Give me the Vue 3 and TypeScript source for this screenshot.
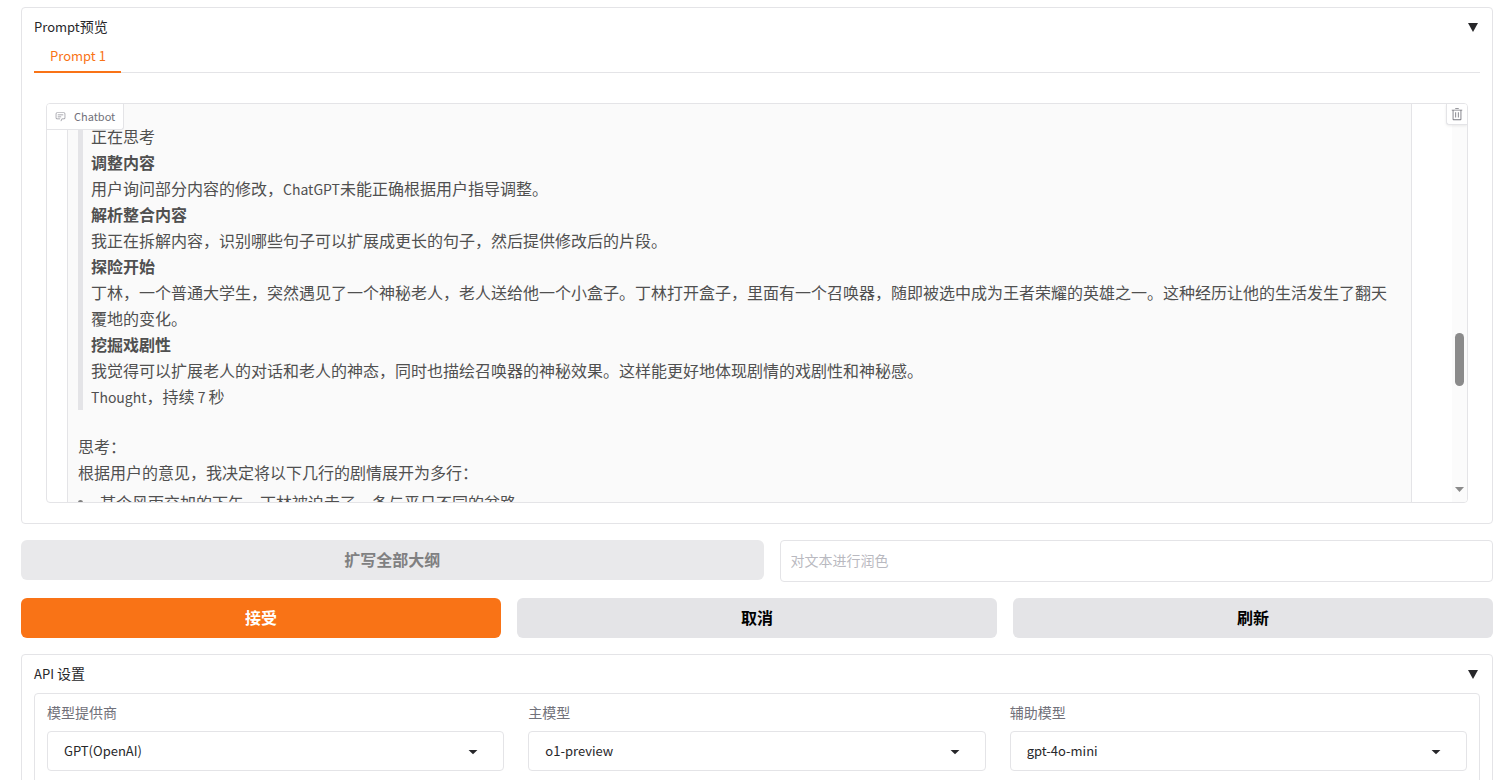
<script setup lang="ts">
import { ref } from 'vue'

interface ModelField {
  id: string
  label: string
  value: string
}

interface Thought {
  heading: string
  body: string
}

const promptOpen = ref(true)
const apiOpen = ref(true)
const polish = ref('')

const thoughts: Thought[] = [
  { heading: '调整内容', body: '用户询问部分内容的修改，ChatGPT未能正确根据用户指导调整。' },
  { heading: '解析整合内容', body: '我正在拆解内容，识别哪些句子可以扩展成更长的句子，然后提供修改后的片段。' },
  {
    heading: '探险开始',
    body: '丁林，一个普通大学生，突然遇见了一个神秘老人，老人送给他一个小盒子。丁林打开盒子，里面有一个召唤器，随即被选中成为王者荣耀的英雄之一。这种经历让他的生活发生了翻天覆地的变化。',
  },
  {
    heading: '挖掘戏剧性',
    body: '我觉得可以扩展老人的对话和老人的神态，同时也描绘召唤器的神秘效果。这样能更好地体现剧情的戏剧性和神秘感。',
  },
]

const fields: ModelField[] = [
  { id: 'provider', label: '模型提供商', value: 'GPT(OpenAI)' },
  { id: 'main-model', label: '主模型', value: 'o1-preview' },
  { id: 'sub-model', label: '辅助模型', value: 'gpt-4o-mini' },
]

// Splits mixed text so that Latin runs can be set a little smaller than the Chinese ones.
const runs = (text: string): string[] => text.split(/([A-Za-z]+)/).filter(Boolean)
const isLatin = (text: string): boolean => /^[A-Za-z]/.test(text)
</script>

<template>
  <main class="page">
    <section class="panel">
      <button class="panel-head" type="button" :aria-expanded="promptOpen" @click="promptOpen = !promptOpen">
        <span class="title"><span class="latin">Prompt</span>预览</span>
        <svg class="marker" viewBox="0 0 10 9" aria-hidden="true"><path d="M0 0h10L5 9z" /></svg>
      </button>
      <div v-show="promptOpen">
        <div class="tabs" role="tablist">
          <button class="tab" type="button" role="tab" aria-selected="true">Prompt 1</button>
        </div>
        <div class="tab-body">
          <div class="chat">
            <div class="chat-label">
              <svg viewBox="0 0 32 32" aria-hidden="true">
                <path d="M17.74 30L16 29l4-7h6a2 2 0 0 0 2-2V8a2 2 0 0 0-2-2H6a2 2 0 0 0-2 2v12a2 2 0 0 0 2 2h9v2H6a4 4 0 0 1-4-4V8a4 4 0 0 1 4-4h20a4 4 0 0 1 4 4v12a4 4 0 0 1-4 4h-4.84Z" />
                <path d="M8 10h16v2H8zm0 6h10v2H8z" />
              </svg>
              <span>Chatbot</span>
            </div>
            <div class="log">
              <article class="bubble">
                <blockquote>
                  <p>正在思考</p>
                  <template v-for="t in thoughts" :key="t.heading">
                    <p><strong>{{ t.heading }}</strong></p>
                    <p><span v-for="(r, i) in runs(t.body)" :key="i" :class="{ 'latin-body': isLatin(r) }">{{ r }}</span></p>
                  </template>
                  <p><span class="latin-body">Thought</span>，持续<span class="latin-body"> 7 </span>秒</p>
                </blockquote>
                <p>思考：</p>
                <p>根据用户的意见，我决定将以下几行的剧情展开为多行：</p>
                <ul>
                  <li>某个风雨交加的下午，丁林被迫走了一条与平日不同的岔路</li>
                </ul>
              </article>
            </div>
            <div class="track" aria-hidden="true">
              <span class="thumb"></span>
              <svg class="down" viewBox="0 0 9 5"><path d="M0 0h9L4.500 5z" /></svg>
            </div>
            <button class="clear" type="button" aria-label="清空">
              <svg viewBox="0 0 32 32" aria-hidden="true">
                <path d="M12 12h2v12h-2zm6 0h2v12h-2z" />
                <path d="M4 6v2h2v20a2 2 0 0 0 2 2h16a2 2 0 0 0 2-2V8h2V6zm4 22V8h16v20zm4-26h8v2h-8z" />
              </svg>
            </button>
          </div>
        </div>
      </div>
    </section>

    <div class="row polish-row">
      <button class="btn" type="button" disabled>扩写全部大纲</button>
      <input v-model="polish" class="polish" type="text" placeholder="对文本进行润色" aria-label="对文本进行润色" />
    </div>

    <div class="row action-row">
      <button class="btn primary" type="button">接受</button>
      <button class="btn" type="button">取消</button>
      <button class="btn" type="button">刷新</button>
    </div>

    <section class="panel api">
      <button class="panel-head" type="button" :aria-expanded="apiOpen" @click="apiOpen = !apiOpen">
        <span class="title"><span class="latin">API</span> 设置</span>
        <svg class="marker" viewBox="0 0 10 9" aria-hidden="true"><path d="M0 0h10L5 9z" /></svg>
      </button>
      <div v-show="apiOpen" class="fields">
        <div v-for="f in fields" :key="f.id" class="field">
          <label :for="f.id">{{ f.label }}</label>
          <div class="select-wrap">
            <select :id="f.id">
              <option>{{ f.value }}</option>
            </select>
            <svg viewBox="0 0 18 18" aria-hidden="true"><path d="M5 8l4 4 4-4z" /></svg>
          </div>
        </div>
      </div>
    </section>
  </main>
</template>

<style>
html {
  overflow: hidden;
}

body {
  margin: 0;
  background: #fff;
}
</style>

<style scoped>
.page,
.page * {
  box-sizing: border-box;
}

.page {
  display: flex;
  flex-direction: column;
  gap: 16px;
  height: 100vh;
  overflow: hidden;
  padding: 7px 10px 0 21px;
  color: #27272a;
  font-family: 'Noto Sans CJK SC', 'Noto Sans', sans-serif;
  font-size: 14px;
  line-height: 20px;
}

.page > * {
  flex: none;
}

button,
input,
select {
  margin: 0;
  font-family: inherit;
}

.panel {
  border: 1px solid #e4e4e7;
  border-radius: 4px;
  padding: 8px 12px 20px;
}

.panel-head {
  display: flex;
  align-items: flex-start;
  justify-content: space-between;
  width: 100%;
  height: 21px;
  padding: 0 2px 0 0;
  border: 0;
  background: none;
  color: inherit;
  font-size: 14px;
  line-height: 20px;
}

.latin {
  font-size: 13px;
  line-height: 1;
}

.latin-body {
  font-size: 14px;
  line-height: 1;
}

.marker {
  width: 10px;
  height: 9px;
  margin-top: 7px;
  fill: currentColor;
}

.tabs {
  display: flex;
  margin-top: 4px;
  height: 32px;
  box-shadow: inset 0 -1px 0 #e4e4e7;
  margin-bottom: 12px;
}

.tab {
  height: 32px;
  padding: 0 15px 0 16px;
  border: 0;
  border-bottom: 2px solid #f97316;
  background: none;
  color: #f97316;
  font-size: 13px;
  line-height: 28px;
}

.tab-body {
  padding: 18px 12px 0;
}

.chat {
  position: relative;
  display: flex;
  height: 400px;
  overflow: hidden;
  border: 1px solid #e4e4e7;
  border-radius: 4px;
}

.chat-label {
  position: absolute;
  top: 0;
  left: 0;
  z-index: 1;
  display: flex;
  align-items: center;
  gap: 8px;
  height: 26px;
  padding: 0 8px;
  border-right: 1px solid #e4e4e7;
  border-bottom: 1px solid #e4e4e7;
  border-bottom-right-radius: 3px;
  background: #fff;
  color: #71717a;
  font-size: 11px;
}

.chat-label span {
  padding-bottom: 1px;
}

.chat-label svg {
  width: 11px;
  height: 11px;
  fill: #8d8d96;
}

.log {
  flex: 1;
  min-width: 0;
  overflow: hidden;
  padding: 0 40px 0 20px;
}

.bubble {
  padding: 19px 10px 0;
  border-right: 1px solid #e4e4e7;
  border-left: 1px solid #e4e4e7;
  background: #fafafa;
  color: #505050;
  font-size: 16px;
  line-height: 26px;
}

.bubble p {
  margin: 0;
}

.bubble blockquote {
  margin: 0 0 23px;
  padding: 0 0 1px 8px;
  border-left: 5px solid #e4e4e7;
}

.bubble ul {
  margin: 4px 0 0;
  padding: 0;
  list-style: none;
}

.bubble li {
  display: flex;
  gap: 17px;
}

.bubble li::before {
  content: '';
  width: 5px;
  height: 5px;
  margin-top: 11px;
  border-radius: 50%;
  background: #808080;
}

.track {
  position: relative;
  width: 15px;
  background: #fbfbfb;
}

.thumb {
  position: absolute;
  top: 229px;
  left: 3px;
  width: 9px;
  height: 53px;
  border-radius: 5px;
  background: #8b8b8b;
}

.down {
  position: absolute;
  bottom: 10px;
  left: 3px;
  width: 9px;
  height: 5px;
  fill: #8b8b8b;
}

.clear {
  position: absolute;
  top: 0;
  right: 0;
  display: flex;
  align-items: center;
  justify-content: center;
  width: 21px;
  height: 21px;
  padding: 0;
  border: 0 solid #e4e4e7;
  border-width: 0 0 1px 1px;
  border-bottom-left-radius: 3px;
  background: #fff;
  box-shadow: 0 1px 3px rgba(0, 0, 0, 0.08);
}

.clear svg {
  width: 14px;
  height: 14px;
  fill: #77777f;
}

.row {
  display: grid;
  gap: 16px;
  align-items: start;
}

.polish-row {
  grid-template-columns: 51fr 49fr;
}

.action-row {
  grid-template-columns: repeat(3, 1fr);
}

.btn {
  height: 40px;
  padding: 0 16px 2px;
  border: 0;
  border-radius: 6px;
  background: #e4e4e7;
  color: #000;
  font-size: 16px;
  font-weight: 700;
  line-height: 24px;
}

.btn:disabled {
  background: #e9e9eb;
  color: #808081;
}

.btn.primary {
  background: #f97316;
  color: #fff;
}

.polish {
  width: 100%;
  height: 42px;
  padding: 0 10px 3px;
  border: 1px solid #e4e4e7;
  border-radius: 4px;
  background: #fff;
  font-size: 14px;
}

.polish::placeholder {
  color: #b9b9c0;
  opacity: 1;
}

.fields {
  display: grid;
  grid-template-columns: repeat(3, 1fr);
  gap: 24px;
  margin-top: 9px;
  padding: 8px 12px 20px;
  border: 1px solid #e4e4e7;
  border-radius: 4px;
}

.field label {
  display: block;
  margin-bottom: 9px;
  color: #71717a;
}

.select-wrap {
  position: relative;
}

.select-wrap select {
  display: block;
  width: 100%;
  height: 40px;
  padding: 0 40px 2px 16px;
  border: 1px solid #e4e4e7;
  border-radius: 4px;
  appearance: none;
  background: #fff;
  color: #27272a;
  font-size: 13px;
}

.select-wrap svg {
  position: absolute;
  top: 10px;
  right: 21px;
  width: 20px;
  height: 20px;
  fill: #27272a;
  pointer-events: none;
}
</style>
